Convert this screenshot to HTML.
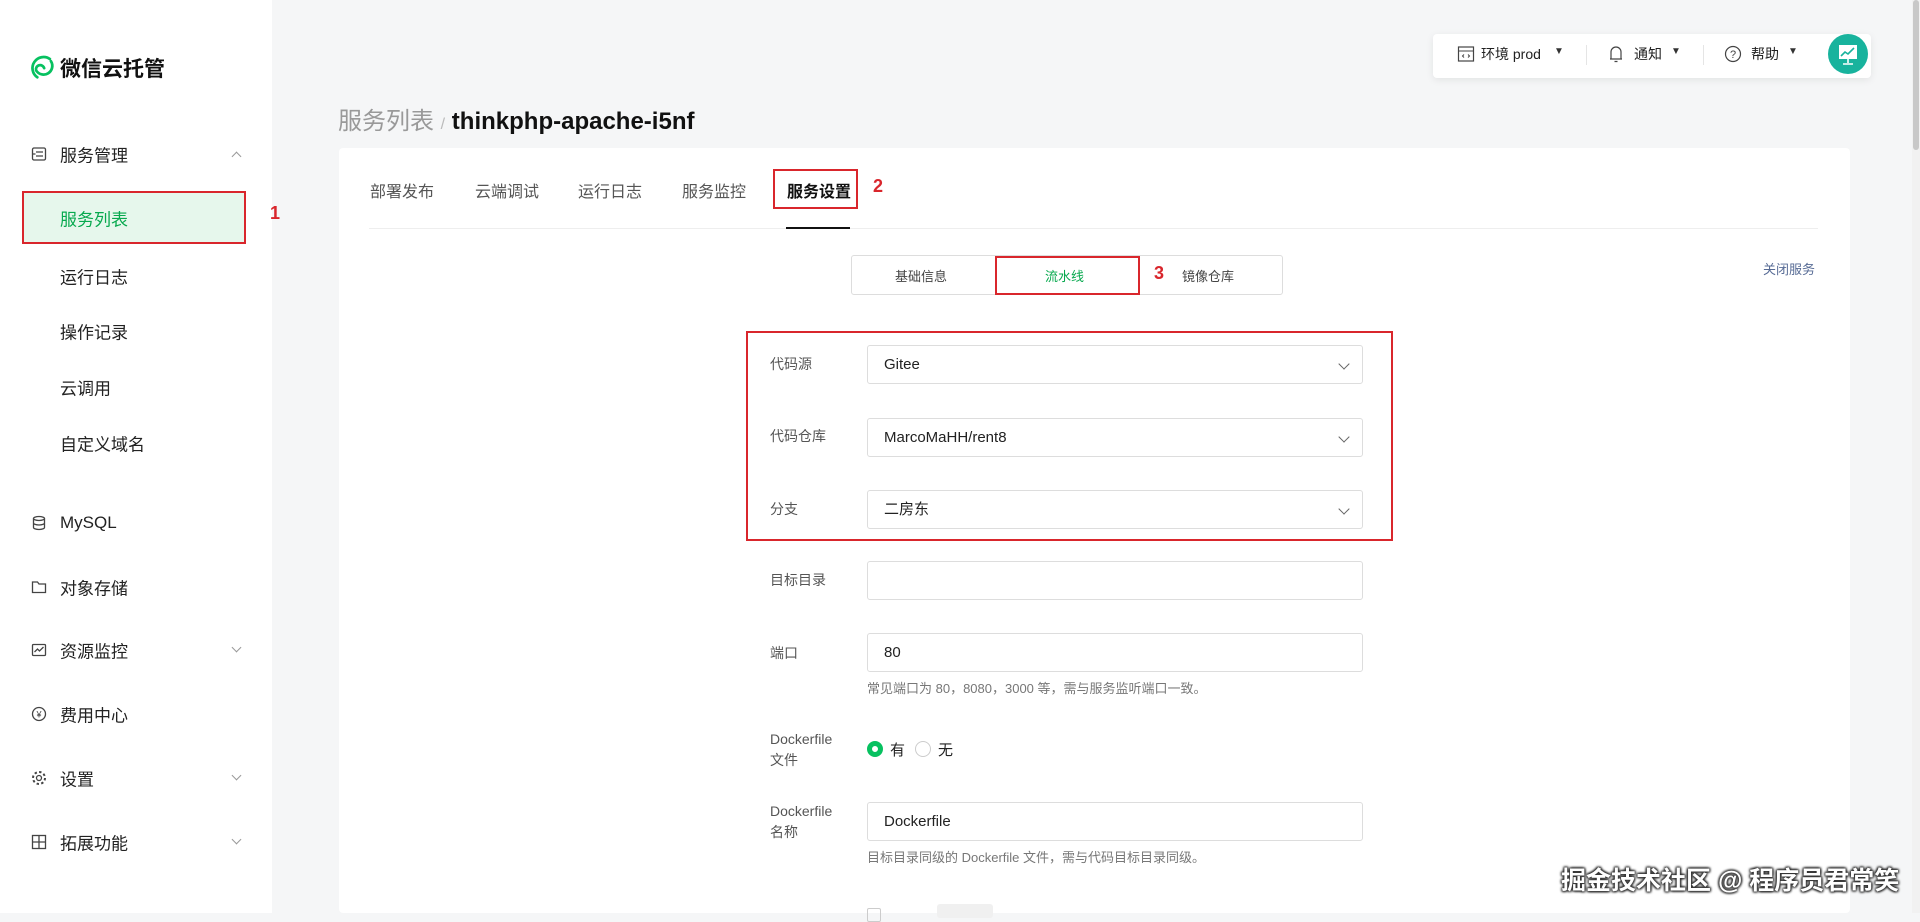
<!DOCTYPE html>
<html><head><meta charset="utf-8"><style>
*{box-sizing:border-box;margin:0;padding:0}
body{width:1920px;height:913px;overflow:hidden;background:#f5f6f7;font-family:"Liberation Sans","Noto Sans CJK SC",sans-serif;color:#333;position:relative}
.abs{position:absolute}
.side{left:0;top:0;width:272px;height:913px;background:#fff}
.nav{position:absolute;left:60px;font-size:17px;color:#222;transform:translateY(-50%);white-space:nowrap}
.ico{position:absolute;left:31px;transform:translateY(-50%);width:16px;height:16px}
.chev{position:absolute;left:233px;width:7px;height:7px;border-right:1.3px solid #999;border-bottom:1.3px solid #999}
.red{position:absolute;border:2px solid #d9262c}
.rn{position:absolute;color:#d9262c;font-weight:bold;font-size:18px}
.tab{position:absolute;top:178px;font-size:16px;color:#555}
.lbl{position:absolute;left:770px;font-size:14px;color:#555;line-height:21px}
.inp{position:absolute;left:867px;width:496px;height:39px;border:1px solid #ddd;border-radius:3px;background:#fff;font-size:15px;color:#222;padding-left:16px;line-height:37px}
.arr{position:absolute;right:14px;top:14px;width:8px;height:8px;border-right:1.5px solid #666;border-bottom:1.5px solid #666;transform:rotate(45deg)}
.hint{position:absolute;left:867px;font-size:13px;color:#777}
</style></head><body>
<div class="abs side"></div>
<svg class="abs" style="left:27px;top:52px" width="32" height="30" viewBox="0 0 28 26"><path d="M9 22 A9 9 0 1 1 20 6 M21 8 A7 7 0 1 1 8 16 A3.5 3.5 0 0 1 15 14" fill="none" stroke="#07c160" stroke-width="2.4" stroke-linecap="round"/></svg>
<div class="abs" style="left:60px;top:53px;font-size:21px;font-weight:bold;color:#111">微信云托管</div>

<svg class="ico" style="top:154px" viewBox="0 0 16 16"><rect x="1.5" y="2" width="13" height="12" rx="1.5" fill="none" stroke="#444" stroke-width="1.3"/><path d="M5 6h7M5 10h7M1.5 8h3" stroke="#444" stroke-width="1.3"/></svg>
<div class="nav" style="top:154px">服务管理</div>
<div class="chev" style="top:153px;transform:rotate(-135deg)"></div>
<div class="abs" style="left:22px;top:191px;width:224px;height:53px;background:#e6f7ec"></div>
<div class="red" style="left:22px;top:191px;width:224px;height:53px"></div>
<div class="nav" style="top:218px;color:#07a94e">服务列表</div>
<div class="rn" style="left:270px;top:203px">1</div>
<div class="nav" style="top:276px">运行日志</div>
<div class="nav" style="top:331px">操作记录</div>
<div class="nav" style="top:387px">云调用</div>
<div class="nav" style="top:443px">自定义域名</div>

<svg class="ico" style="top:523px" viewBox="0 0 16 16"><ellipse cx="8" cy="3.5" rx="5.5" ry="2" fill="none" stroke="#444" stroke-width="1.3"/><path d="M2.5 3.5v9c0 1.1 2.5 2 5.5 2s5.5-.9 5.5-2v-9M2.5 8c0 1.1 2.5 2 5.5 2s5.5-.9 5.5-2" fill="none" stroke="#444" stroke-width="1.3"/></svg>
<div class="nav" style="top:523px">MySQL</div>
<svg class="ico" style="top:587px" viewBox="0 0 16 16"><path d="M1.5 3h5l1.5 2h6.5v8.5h-13z" fill="none" stroke="#444" stroke-width="1.3"/></svg>
<div class="nav" style="top:587px">对象存储</div>
<svg class="ico" style="top:650px" viewBox="0 0 16 16"><rect x="1.5" y="2.5" width="13" height="11" rx="1" fill="none" stroke="#444" stroke-width="1.3"/><path d="M3.5 10l3-3 2 2 4-4" fill="none" stroke="#444" stroke-width="1.3"/></svg>
<div class="nav" style="top:650px">资源监控</div>
<div class="chev" style="top:644px;transform:rotate(45deg)"></div>
<svg class="ico" style="top:714px" viewBox="0 0 16 16"><circle cx="8" cy="8" r="6.5" fill="none" stroke="#444" stroke-width="1.3"/><text x="8" y="11.5" font-size="9" text-anchor="middle" fill="#444" font-family="Liberation Sans">¥</text></svg>
<div class="nav" style="top:714px">费用中心</div>
<svg class="ico" style="top:778px" viewBox="0 0 16 16"><circle cx="8" cy="8" r="2.5" fill="none" stroke="#444" stroke-width="1.3"/><circle cx="8" cy="8" r="6" fill="none" stroke="#444" stroke-width="2" stroke-dasharray="2.4 2.3"/></svg>
<div class="nav" style="top:778px">设置</div>
<div class="chev" style="top:772px;transform:rotate(45deg)"></div>
<svg class="ico" style="top:842px" viewBox="0 0 16 16"><rect x="1.5" y="1.5" width="13" height="13" fill="none" stroke="#444" stroke-width="1.3"/><path d="M1.5 8h13M8 1.5v13" stroke="#444" stroke-width="1.3"/></svg>
<div class="nav" style="top:842px">拓展功能</div>
<div class="chev" style="top:836px;transform:rotate(45deg)"></div>

<!-- toolbar -->
<div class="abs" style="left:1433px;top:34px;width:438px;height:44px;background:#fff;border-radius:4px;box-shadow:0 2px 8px rgba(0,0,0,.08)"></div>
<svg class="abs" style="left:1457px;top:45px" width="18" height="18" viewBox="0 0 18 18"><rect x="1.5" y="2" width="15" height="14" fill="none" stroke="#444" stroke-width="1.2"/><path d="M1.5 6h15M7 9.5l-1.5 1.5 1.5 1.5M11 9.5l1.5 1.5-1.5 1.5" fill="none" stroke="#444" stroke-width="1"/></svg>
<div class="abs" style="left:1481px;top:44px;font-size:14px;color:#222">环境 prod</div>
<div class="abs" style="left:1554px;top:46px;font-size:10px;color:#333">▼</div>
<div class="abs" style="left:1586px;top:45px;width:1px;height:20px;background:#e5e5e5"></div>
<svg class="abs" style="left:1609px;top:45px" width="14" height="18" viewBox="0 0 14 18"><path d="M2 14V7a5 5 0 0 1 10 0v7zM1 14h12M5.5 16.5h3" fill="none" stroke="#444" stroke-width="1.2"/></svg>
<div class="abs" style="left:1634px;top:44px;font-size:14px;color:#222">通知</div>
<div class="abs" style="left:1671px;top:46px;font-size:10px;color:#333">▼</div>
<div class="abs" style="left:1703px;top:45px;width:1px;height:20px;background:#e5e5e5"></div>
<svg class="abs" style="left:1724px;top:45px" width="18" height="18" viewBox="0 0 18 18"><circle cx="9" cy="9" r="7.5" fill="none" stroke="#444" stroke-width="1.2"/><text x="9" y="13" font-size="11" text-anchor="middle" fill="#444" font-family="Liberation Sans">?</text></svg>
<div class="abs" style="left:1751px;top:44px;font-size:14px;color:#222">帮助</div>
<div class="abs" style="left:1788px;top:46px;font-size:10px;color:#333">▼</div>
<svg class="abs" style="left:1827px;top:33px" width="42" height="42" viewBox="0 0 42 42"><circle cx="21" cy="21" r="20" fill="#18b39d"/><rect x="12" y="12" width="18" height="14" fill="#fff"/><path d="M14 23l4-4 3 2 6-6" fill="none" stroke="#18b39d" stroke-width="1.6"/><path d="M21 26v4M16 31h10" stroke="#fff" stroke-width="1.6"/></svg>

<!-- breadcrumb -->
<div class="abs" style="left:338px;top:101px;font-size:24px;white-space:nowrap"><span style="color:#999">服务列表</span> <span style="color:#bbb;font-size:16px">/</span> <span style="font-weight:bold;color:#111">thinkphp-apache-i5nf</span></div>

<!-- card -->
<div class="abs" style="left:339px;top:148px;width:1511px;height:765px;background:#fff;border-radius:4px"></div>
<div class="tab" style="left:370px">部署发布</div>
<div class="tab" style="left:475px">云端调试</div>
<div class="tab" style="left:578px">运行日志</div>
<div class="tab" style="left:682px">服务监控</div>
<div class="tab" style="left:787px;color:#111;font-weight:bold">服务设置</div>
<div class="red" style="left:773px;top:169px;width:85px;height:40px"></div>
<div class="rn" style="left:873px;top:176px">2</div>
<div class="abs" style="left:369px;top:228px;width:1449px;height:1px;background:#eee"></div>
<div class="abs" style="left:786px;top:227px;width:64px;height:2px;background:#111"></div>

<div class="abs" style="left:851px;top:255px;width:432px;height:40px;border:1px solid #ddd;border-radius:3px"></div>
<div class="abs" style="left:995px;top:256px;width:1px;height:38px;background:#ddd"></div>
<div class="abs" style="left:895px;top:266px;font-size:13px;color:#444">基础信息</div>
<div class="abs" style="left:1045px;top:266px;font-size:13px;color:#07a94e">流水线</div>
<div class="abs" style="left:1182px;top:266px;font-size:13px;color:#444">镜像仓库</div>
<div class="red" style="left:995px;top:256px;width:145px;height:39px"></div>
<div class="rn" style="left:1154px;top:263px">3</div>
<div class="abs" style="left:1763px;top:259px;font-size:13px;color:#576b95">关闭服务</div>

<div class="red" style="left:746px;top:331px;width:647px;height:210px"></div>
<div class="lbl" style="top:354px">代码源</div>
<div class="inp" style="top:345px">Gitee<i class="arr"></i></div>
<div class="lbl" style="top:426px">代码仓库</div>
<div class="inp" style="top:418px">MarcoMaHH/rent8<i class="arr"></i></div>
<div class="lbl" style="top:499px">分支</div>
<div class="inp" style="top:490px">二房东<i class="arr"></i></div>
<div class="lbl" style="top:570px">目标目录</div>
<div class="inp" style="top:561px"></div>
<div class="lbl" style="top:643px">端口</div>
<div class="inp" style="top:633px">80</div>
<div class="hint" style="top:678px">常见端口为 80，8080，3000 等，需与服务监听端口一致。</div>
<div class="lbl" style="top:729px">Dockerfile<br>文件</div>
<div class="abs" style="left:867px;top:741px;width:16px;height:16px;border-radius:50%;border:5px solid #07c160"></div>
<div class="abs" style="left:890px;top:739px;font-size:15px;color:#222">有</div>
<div class="abs" style="left:915px;top:741px;width:16px;height:16px;border-radius:50%;border:1px solid #ccc"></div>
<div class="abs" style="left:938px;top:739px;font-size:15px;color:#222">无</div>
<div class="lbl" style="top:801px">Dockerfile<br>名称</div>
<div class="inp" style="top:802px">Dockerfile</div>
<div class="hint" style="top:847px">目标目录同级的 Dockerfile 文件，需与代码目标目录同级。</div>
<div class="abs" style="left:867px;top:908px;width:14px;height:14px;border:1px solid #ccc;border-radius:2px"></div>
<div class="abs" style="left:937px;top:904px;width:56px;height:14px;background:#f0f0f0;border-radius:3px"></div>

<div class="abs" style="left:1561px;top:861px;font-size:25px;color:#fff;font-weight:bold;white-space:nowrap;text-shadow:1px 1px 2px #333,-1px -1px 2px #333,1px -1px 2px #333,-1px 1px 2px #333">掘金技术社区 @ 程序员君常笑</div>
<div class="abs" style="left:1912px;top:0;width:8px;height:913px;background:#f1f1f1"></div>
<div class="abs" style="left:1913px;top:0;width:6px;height:150px;background:#c8c8c8;border-radius:3px"></div>
</body></html>
